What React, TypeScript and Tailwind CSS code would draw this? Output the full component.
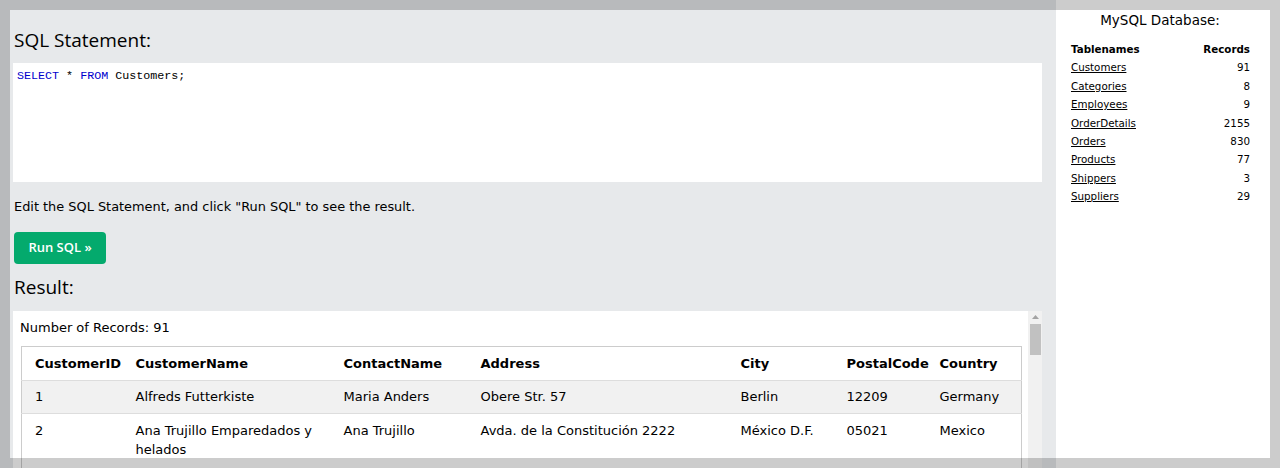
import React from 'react';

const tables: [string, number][] = [
  ["Customers", 91],
  ["Categories", 8],
  ["Employees", 9],
  ["OrderDetails", 2155],
  ["Orders", 830],
  ["Products", 77],
  ["Shippers", 3],
  ["Suppliers", 29],
];

const rows = [
  ["1", "Alfreds Futterkiste", "Maria Anders", "Obere Str. 57", "Berlin", "12209", "Germany"],
  ["2", "Ana Trujillo Emparedados y helados", "Ana Trujillo", "Avda. de la Constitución 2222", "México D.F.", "05021", "Mexico"],
];

const heads = ["CustomerID", "CustomerName", "ContactName", "Address", "City", "PostalCode", "Country"];
const widths = ["w-[106px]", "w-[208px]", "w-[137px]", "w-[260px]", "w-[106px]", "w-[93px]", "w-[90px]"];

const App: React.FC = () => {
  return (
    <div className="relative w-[1280px] h-[468px] overflow-hidden flex bg-white text-black">
      {/* Left: editor + result */}
      <div className="w-[1056px] shrink-0 bg-[#e7e9eb] pl-[13px] pr-[14px]">
        <h3 className="pt-[28px] mb-[11px] pl-px text-[19px] leading-[24px] font-['Open_Sans',sans-serif]">SQL Statement:</h3>
        <div className="h-[119px] bg-white pl-[4px] pt-[5px]">
          <pre className="text-[11.7px] leading-[16px] font-['Liberation_Mono',monospace]">
            <span className="text-[#0000cd]">SELECT</span> * <span className="text-[#0000cd]">FROM</span> Customers;
          </pre>
        </div>
        <p className="mt-[15px] pl-px text-[12.9px] leading-[20px] font-['DejaVu_Sans',sans-serif]">
          Edit the SQL Statement, and click "Run SQL" to see the result.
        </p>
        <button className="mt-[15px] ml-px h-[32px] w-[92px] rounded-[4px] bg-[#04aa6d] text-white text-[13px] font-semibold font-['Open_Sans',sans-serif]">
          Run SQL »
        </button>
        <h3 className="mt-[11px] mb-[12px] pl-px text-[19px] leading-[24px] font-['Open_Sans',sans-serif]">Result:</h3>
        <div className="flex bg-white h-[200px]">
          <div className="flex-1 pl-[8px] pt-[7px] font-['DejaVu_Sans',sans-serif]">
            <p className="text-[13px] leading-[20px] -ml-px">Number of Records: 91</p>
            <table className="mt-[8px] table-fixed border-collapse border border-[#cccccc] w-[1000px] text-[13px] leading-[19px]">
              <thead>
                <tr className="h-[34px]">
                  {heads.map((h, i) => (
                    <th key={h} className={`${widths[i]} ${i === 0 ? "pl-[13px]" : "pl-[8px]"} pr-[4px] text-left font-bold`}>
                      {h}
                    </th>
                  ))}
                </tr>
              </thead>
              <tbody>
                {rows.map((r, ri) => (
                  <tr key={ri} className={`border-t border-[#dddddd] align-top ${ri % 2 === 0 ? "bg-[#f1f1f1]" : "bg-white"}`}>
                    {r.map((c, i) => (
                      <td key={i} className={`${i === 0 ? "pl-[13px]" : "pl-[8px]"} pr-[8px] ${ri === 0 ? "pt-[6px] pb-[7px]" : "pt-[7px] pb-[14px]"}`}>
                        {c}
                      </td>
                    ))}
                  </tr>
                ))}
              </tbody>
            </table>
          </div>
          {/* scrollbar */}
          <div className="w-[14px] bg-[#f1f1f1] flex flex-col items-center pt-[4px]">
            <svg width="7" height="4" viewBox="0 0 7 4" className="mb-[5px]">
              <path d="M0 4 L3.5 0 L7 4 Z" fill="#a3a3a3" />
            </svg>
            <div className="w-[11px] h-[31px] bg-[#c1c1c1]" />
          </div>
        </div>
      </div>

      {/* Right: database list */}
      <div className="flex-1 bg-white pr-[16px]">
        <div className="w-[208px] font-['DejaVu_Sans',sans-serif]">
          <h4 className="pt-[10px] text-center text-[13.5px] leading-[20px]">MySQL Database:</h4>
          <table className="mt-[10px] ml-[15px] w-[179px] text-[10.3px] leading-[18.4px]">
            <thead>
              <tr>
                <th className="text-left font-bold">Tablenames</th>
                <th className="text-right font-bold">Records</th>
              </tr>
            </thead>
            <tbody>
              {tables.map(([n, c]) => (
                <tr key={n}>
                  <td><a href="#" className="underline text-black">{n}</a></td>
                  <td className="text-right">{c}</td>
                </tr>
              ))}
            </tbody>
          </table>
        </div>
      </div>

      {/* translucent frame over the page */}
      <div className="absolute inset-0 border-[10px] border-black/20 pointer-events-none" />
    </div>
  );
};

export default App;
